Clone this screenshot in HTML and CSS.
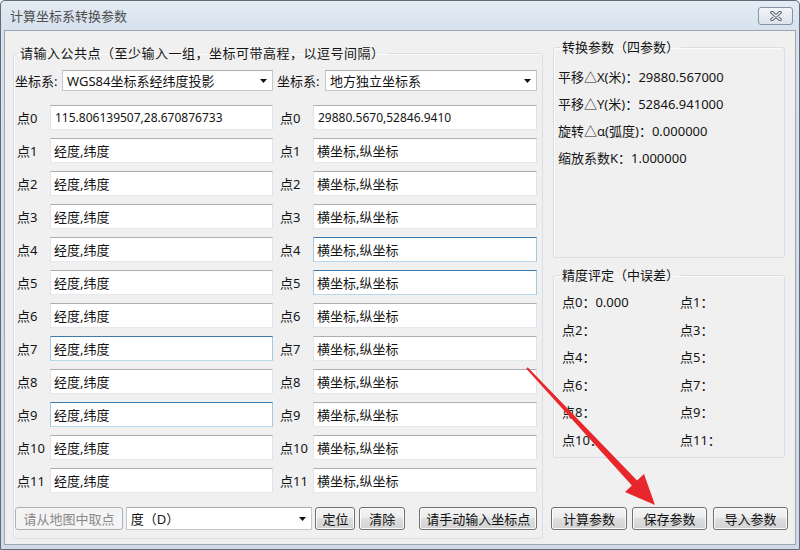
FILE: index.html
```html
<!DOCTYPE html>
<html lang="zh-CN">
<head>
<meta charset="utf-8">
<title>计算坐标系转换参数</title>
<link rel="stylesheet" href="styles.css">
</head>
<body>
<div class="window">
  <div class="titlebar">
    <span class="title">计算坐标系转换参数</span>
    <div class="close">
      <svg width="14" height="10" viewBox="0 0 14 10"><path d="M3 1.5 L11 8.5 M11 1.5 L3 8.5" stroke="#5b6672" stroke-width="3.6" stroke-linecap="round" fill="none"/><path d="M3 1.5 L11 8.5 M11 1.5 L3 8.5" stroke="#f4f6f8" stroke-width="1.4" stroke-linecap="round" fill="none"/></svg>
    </div>
  </div>
  <div class="client">
    <fieldset class="group left">
      <legend class="lg-left">请输入公共点（至少输入一组，坐标可带高程，以逗号间隔）</legend>
      <div class="sysrow">
        <span class="lbl">坐标系:</span>
        <div class="combo"><span>WGS84坐标系经纬度投影</span><svg class="arrow" width="7" height="4" viewBox="0 0 7 4"><polygon points="0,0 7,0 3.5,4" fill="#111"/></svg></div>
        <span class="lbl lbl2">坐标系:</span>
        <div class="combo"><span>地方独立坐标系</span><svg class="arrow" width="7" height="4" viewBox="0 0 7 4"><polygon points="0,0 7,0 3.5,4" fill="#111"/></svg></div>
      </div>
      <div class="points">
        <span class="pl">点0</span><input class="tb num" type="text" value="115.806139507,28.670876733"><span class="pr">点0</span><input class="tb num" type="text" value="29880.5670,52846.9410">
        <span class="pl">点1</span><input class="tb" type="text" value="经度,纬度"><span class="pr">点1</span><input class="tb" type="text" value="横坐标,纵坐标">
        <span class="pl">点2</span><input class="tb" type="text" value="经度,纬度"><span class="pr">点2</span><input class="tb" type="text" value="横坐标,纵坐标">
        <span class="pl">点3</span><input class="tb" type="text" value="经度,纬度"><span class="pr">点3</span><input class="tb" type="text" value="横坐标,纵坐标">
        <span class="pl">点4</span><input class="tb" type="text" value="经度,纬度"><span class="pr">点4</span><input class="tb hl" type="text" value="横坐标,纵坐标">
        <span class="pl">点5</span><input class="tb" type="text" value="经度,纬度"><span class="pr">点5</span><input class="tb hl" type="text" value="横坐标,纵坐标">
        <span class="pl">点6</span><input class="tb" type="text" value="经度,纬度"><span class="pr">点6</span><input class="tb" type="text" value="横坐标,纵坐标">
        <span class="pl">点7</span><input class="tb hl" type="text" value="经度,纬度"><span class="pr">点7</span><input class="tb" type="text" value="横坐标,纵坐标">
        <span class="pl">点8</span><input class="tb" type="text" value="经度,纬度"><span class="pr">点8</span><input class="tb" type="text" value="横坐标,纵坐标">
        <span class="pl">点9</span><input class="tb hl" type="text" value="经度,纬度"><span class="pr">点9</span><input class="tb" type="text" value="横坐标,纵坐标">
        <span class="pl">点10</span><input class="tb" type="text" value="经度,纬度"><span class="pr">点10</span><input class="tb" type="text" value="横坐标,纵坐标">
        <span class="pl">点11</span><input class="tb" type="text" value="经度,纬度"><span class="pr">点11</span><input class="tb" type="text" value="横坐标,纵坐标">
      </div>
      <div class="bottomrow">
        <div class="btn disabled w-pick">请从地图中取点</div>
        <div class="combo w-unit"><span>度（D）</span><svg class="arrow" width="7" height="4" viewBox="0 0 7 4"><polygon points="0,0 7,0 3.5,4" fill="#111"/></svg></div>
        <div class="btn w-loc">定位</div>
        <div class="btn w-clr">清除</div>
        <div class="btn w-man">请手动输入坐标点</div>
      </div>
    </fieldset>
    <div class="rightcol">
      <fieldset class="group g1">
        <legend>转换参数（四参数）</legend>
        <div class="param">平移△X(米)：29880.567000</div>
        <div class="param">平移△Y(米)：52846.941000</div>
        <div class="param">旋转△α(弧度)：0.000000</div>
        <div class="param">缩放系数K：1.000000</div>
      </fieldset>
      <fieldset class="group g2">
        <legend>精度评定（中误差）</legend>
        <div class="acc">
          <span>点0：0.000</span><span>点1：</span>
          <span>点2：</span><span>点3：</span>
          <span>点4：</span><span>点5：</span>
          <span>点6：</span><span>点7：</span>
          <span>点8：</span><span>点9：</span>
          <span>点10：</span><span>点11：</span>
        </div>
      </fieldset>
      <div class="rbtns">
        <div class="btn w-calc">计算参数</div>
        <div class="btn w-save">保存参数</div>
        <div class="btn w-imp">导入参数</div>
      </div>
    </div>
  </div>
  <svg class="annot" width="800" height="550" viewBox="0 0 800 550">
    <polygon points="527.7,367.3 637.1,480.6 644,474.1 655,505 625,491.9 631.9,485.4 526.3,368.7" fill="#e8262b"/>
  </svg>
</div>
</body>
</html>
```
FILE: styles.css
```css
* { box-sizing: border-box; }

body {
  margin: 0;
  width: 800px;
  height: 550px;
  overflow: hidden;
  font-family: "Noto Sans", "Noto Sans CJK SC", sans-serif;
  font-size: 13px;
  color: #141414;
  background: #f0f0f0;
}

.window {
  position: relative;
  width: 800px;
  height: 550px;
  border: 1px solid #5f6b78;
  border-radius: 5px 5px 0 0;
  background: linear-gradient(#e4ecf4, #d6e1ec 30px, #cfdae6);
  padding: 0 3px 4px 3px;
  display: flex;
  flex-direction: column;
}

.titlebar {
  height: 29px;
  flex: none;
  display: flex;
  justify-content: space-between;
  align-items: flex-start;
}

.title {
  font-family: "Noto Sans CJK SC", sans-serif;
  font-size: 13px;
  color: #4e4e4e;
  line-height: 29px;
  padding-left: 6px;
}

.close {
  margin-top: 6px;
  margin-right: 3px;
  width: 35px;
  height: 18px;
  border: 1px solid #8594a4;
  border-radius: 3px;
  background: linear-gradient(#f3f6f9, #dbe3ec);
  display: flex;
  align-items: center;
  justify-content: center;
}

.client {
  flex: 1;
  background: #f0f0f0;
  border: 1px solid #9ba6b2;
  display: flex;
  align-items: flex-start;
}

.group {
  margin: 0;
  min-width: 0;
  border: 1px solid #d5dfe5;
  border-radius: 3px;
  box-shadow: inset 1px 1px 0 #fbfbfb;
}

.group legend {
  padding: 0 2px;
  font-size: 13px;
  line-height: 19px;
}

/* left group */
.left {
  margin: 13px 0 0 8px;
  width: 530px;
  height: 495px;
  padding: 7px 5px 8px 1px;
}

.lg-left {
  margin-left: 3px;
  letter-spacing: 0.5px;
}

.sysrow {
  display: grid;
  grid-template-columns: 47px 211px 52px 212px;
  height: 21px;
  align-items: center;
}

.lbl2 { padding-left: 4px; }

.combo {
  height: 21px;
  background: #fff;
  border: 1px solid #c4c7cc;
  border-top-color: #abadb3;
  display: flex;
  align-items: center;
  justify-content: space-between;
  padding: 0 5px 0 4px;
  font-size: 13px;
}

.arrow { flex: none; }

.points {
  margin-top: 14px;
  display: grid;
  grid-template-columns: 35px 223px 40px 224px;
  grid-auto-rows: 25px;
  row-gap: 8px;
  align-items: center;
}

.pl { padding-left: 2px; }
.pr { padding-left: 7px; }

.tb {
  height: 25px;
  width: 100%;
  margin: 0;
  border: 1px solid #e2e3ea;
  border-top-color: #abadb3;
  border-bottom-color: #e3e9ef;
  background: #fff;
  padding: 0 3px;
  font-family: "Noto Sans", "Noto Sans CJK SC", sans-serif;
  font-size: 13px;
  color: #141414;
  outline: none;
}

.tb.num { font-size: 12px; padding-left: 4px; }

.tb.hl {
  border-color: #a4c9e3;
  border-top-color: #3d7bad;
  border-bottom-color: #b7d9ed;
}

.bottomrow {
  margin-top: 14px;
  display: flex;
  height: 23px;
}

.btn {
  height: 23px;
  border: 1px solid #707070;
  border-radius: 3px;
  background: linear-gradient(#f4f4f4 0%, #ececec 50%, #dedede 50%, #d2d2d2 100%);
  box-shadow: inset 0 0 0 1px #fcfcfc;
  display: flex;
  align-items: center;
  justify-content: center;
  font-size: 13px;
  color: #111;
  white-space: nowrap;
}

.btn.disabled {
  border-color: #adb2b5;
  background: #f4f4f4;
  box-shadow: none;
  color: #8a8a8a;
}

.w-pick { width: 108px; }
.w-unit { width: 187px; margin-left: 3px; height: 23px; }
.w-loc { width: 40px; margin-left: 3px; }
.w-clr { width: 46px; margin-left: 4px; }
.w-man { width: 118px; margin-left: 14px; }

/* right column */
.rightcol {
  margin: 7px 0 0 8px;
  width: 238px;
  display: flex;
  flex-direction: column;
}

.g1 {
  margin: 0 4px 0 2px;
  height: 220px;
  padding: 7px 4px 0 4px;
}

.g1 legend { margin-left: 2px; }

.param {
  line-height: 27px;
  white-space: nowrap;
}

.g2 {
  margin: 8px 4px 0 2px;
  height: 192px;
  padding: 4px 8px 0 8px;
}

.g2 legend { margin-left: -2px; }

.acc {
  display: grid;
  grid-template-columns: 118px 1fr;
  line-height: 27.5px;
  white-space: nowrap;
}

.rbtns {
  margin-top: 49px;
  display: flex;
}

.w-calc { width: 76px; }
.w-save { width: 75px; margin-left: 5px; }
.w-imp { width: 75px; margin-left: 6px; }

.annot {
  position: absolute;
  left: -1px;
  top: -1px;
  pointer-events: none;
}
```
